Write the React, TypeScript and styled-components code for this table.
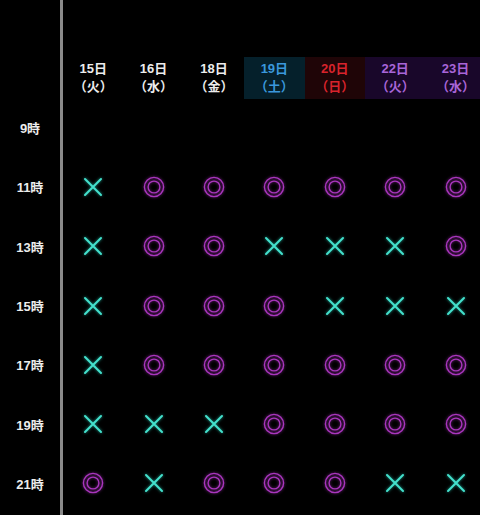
import React from 'react'
import styled, { createGlobalStyle } from 'styled-components'

type Mark = 'o' | 'x' | ''
type Tone = 'plain' | 'sat' | 'sun' | 'holiday'

const days: { date: string; week: string; tone: Tone }[] = [
  { date: '15日', week: '（火）', tone: 'plain' },
  { date: '16日', week: '（水）', tone: 'plain' },
  { date: '18日', week: '（金）', tone: 'plain' },
  { date: '19日', week: '（土）', tone: 'sat' },
  { date: '20日', week: '（日）', tone: 'sun' },
  { date: '22日', week: '（火）', tone: 'holiday' },
  { date: '23日', week: '（水）', tone: 'holiday' },
]

const rows: { time: string; marks: Mark[] }[] = [
  { time: '9時', marks: ['', '', '', '', '', '', ''] },
  { time: '11時', marks: ['x', 'o', 'o', 'o', 'o', 'o', 'o'] },
  { time: '13時', marks: ['x', 'o', 'o', 'x', 'x', 'x', 'o'] },
  { time: '15時', marks: ['x', 'o', 'o', 'o', 'x', 'x', 'x'] },
  { time: '17時', marks: ['x', 'o', 'o', 'o', 'o', 'o', 'o'] },
  { time: '19時', marks: ['x', 'x', 'x', 'o', 'o', 'o', 'o'] },
  { time: '21時', marks: ['o', 'x', 'o', 'o', 'o', 'x', 'x'] },
]

const tones: Record<Tone, { bg: string; fg: string }> = {
  plain: { bg: 'transparent', fg: '#ececec' },
  sat: { bg: '#05202b', fg: '#3a98dc' },
  sun: { bg: '#1f0507', fg: '#d8232c' },
  holiday: { bg: '#19072a', fg: '#a865d8' },
}

const Global = createGlobalStyle`
  html, body { margin: 0; background: #000; }
  body { font-family: "Liberation Sans", "Noto Sans CJK JP", sans-serif; }
`

const Maru = () => (
  <MarkSvg viewBox="0 0 22 22" $glow="rgba(170,50,190,0.7)">
    <circle cx="11" cy="11" r="9.6" fill="none" stroke="#a936bd" strokeWidth="1.4" />
    <circle cx="11" cy="11" r="5.9" fill="none" stroke="#a936bd" strokeWidth="1.4" />
  </MarkSvg>
)

const Batsu = () => (
  <MarkSvg viewBox="0 0 22 22" $glow="rgba(40,210,190,0.7)">
    <path d="M3 3L19 19M19 3L3 19" stroke="#44e0cc" strokeWidth="2" strokeLinecap="round" />
  </MarkSvg>
)

const App = () => (
  <>
    <Global />
    <ScTable>
      <TimeCol>
        <HeadSpacer />
        {rows.map((r) => (
          <TimeCell key={r.time}>{r.time}</TimeCell>
        ))}
      </TimeCol>
      <Grid>
        <HeadRow>
          {days.map((d) => (
            <DayCell key={d.date} $tone={d.tone}>
              <span>{d.date}</span>
              <span>{d.week}</span>
            </DayCell>
          ))}
        </HeadRow>
        {rows.map((r) => (
          <MarkRow key={r.time}>
            {r.marks.map((m, i) => (
              <MarkCell key={i}>{m === 'o' ? <Maru /> : m === 'x' ? <Batsu /> : null}</MarkCell>
            ))}
          </MarkRow>
        ))}
      </Grid>
    </ScTable>
  </>
)

const ScTable = styled.div`
  display: flex;
  width: 480px;
  height: 515px;
  overflow: hidden;
  background: #000;
`

const TimeCol = styled.div`
  flex: 0 0 60px;
  display: flex;
  flex-direction: column;
  border-right: 3px solid #8a8a8a;
`

const HeadSpacer = styled.div`
  flex: 0 0 98px;
`

const TimeCell = styled.div`
  flex: 0 0 59.3px;
  display: flex;
  align-items: center;
  justify-content: center;
  color: #ececec;
  font-size: 13px;
  font-weight: 700;
`

const Grid = styled.div`
  display: flex;
  flex-direction: column;
  flex: 0 0 auto;
`

const HeadRow = styled.div`
  display: grid;
  grid-template-columns: repeat(7, 60.4px);
  height: 98px;
  align-items: end;
`

const DayCell = styled.div<{ $tone: Tone }>`
  height: 42px;
  margin-bottom: -1px;
  display: flex;
  flex-direction: column;
  align-items: center;
  justify-content: center;
  background: ${(p) => tones[p.$tone].bg};
  color: ${(p) => tones[p.$tone].fg};
  font-size: 13px;
  font-weight: 700;
  line-height: 18px;
`

const MarkRow = styled.div`
  display: grid;
  grid-template-columns: repeat(7, 60.4px);
  height: 59.3px;
`

const MarkCell = styled.div`
  display: flex;
  align-items: center;
  justify-content: center;
`

const MarkSvg = styled.svg<{ $glow: string }>`
  width: 22px;
  height: 22px;
  filter: drop-shadow(0 0 1.5px ${(p) => p.$glow});
`

export default App
